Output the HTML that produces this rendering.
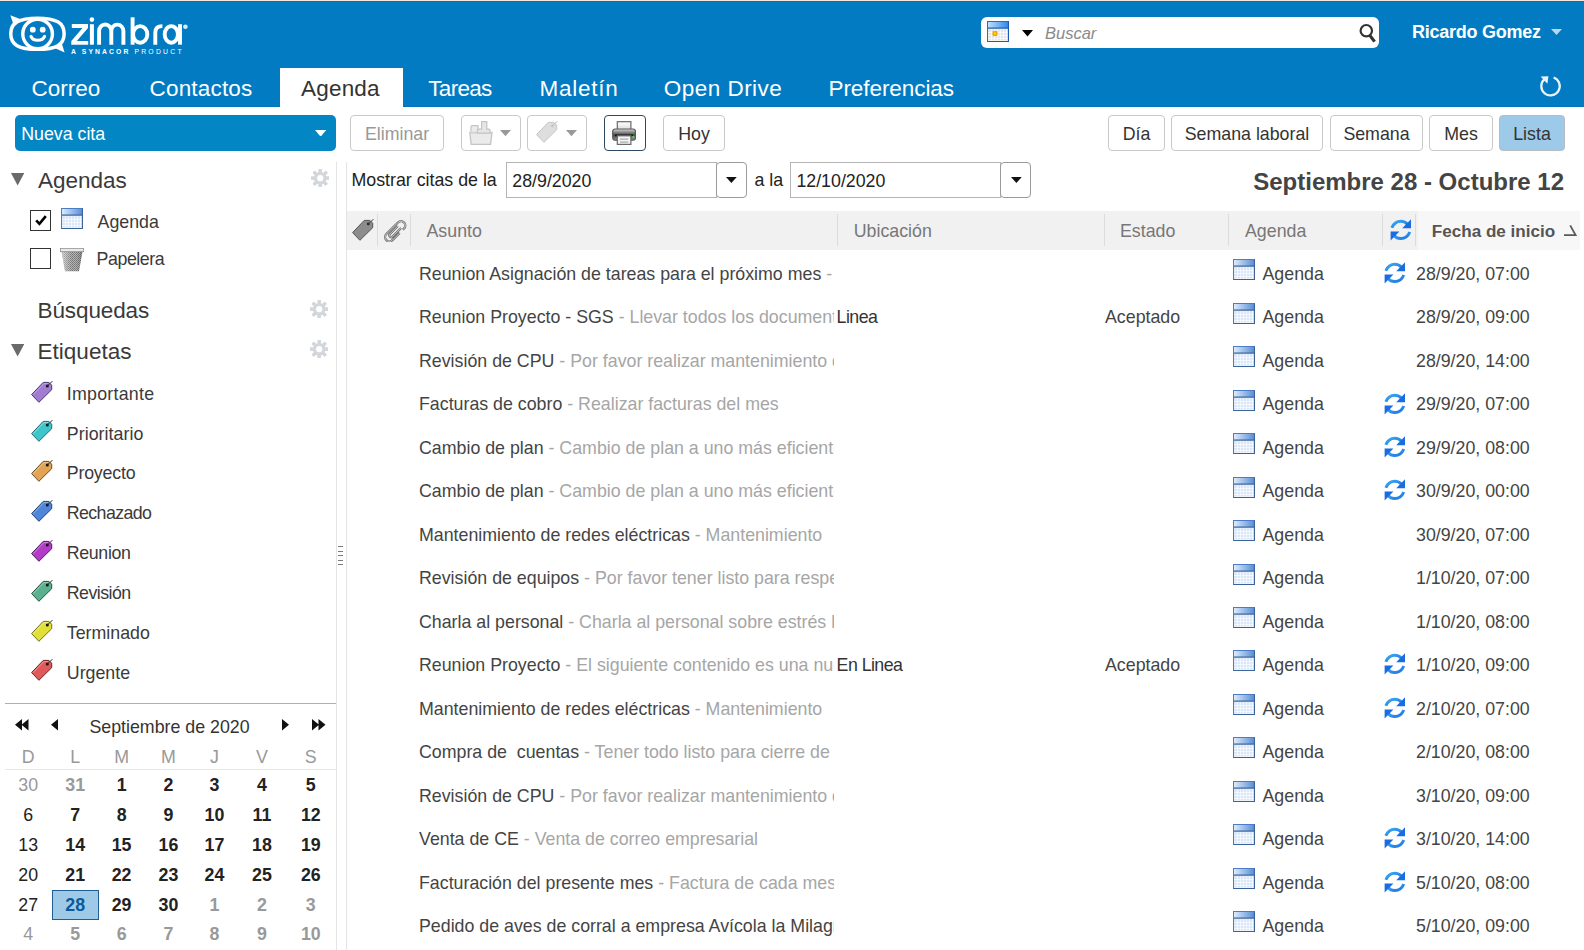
<!DOCTYPE html>
<html><head><meta charset="utf-8"><title>Zimbra</title><style>
*{box-sizing:border-box}
html,body{margin:0;padding:0;width:1584px;height:950px;overflow:hidden;background:#fff;font-family:"Liberation Sans", sans-serif}
.a{position:absolute}
svg.a{z-index:1}
.t{position:absolute;line-height:1;white-space:nowrap}
.btn{position:absolute;border:1px solid #c9c9c9;border-radius:4px;background:#fff}
</style></head>
<body>
<div class="a" style="left:0;top:0;width:1584px;height:1px;background:#f3e6dc"></div>
<div class="a" style="left:0;top:1px;width:1584px;height:106px;background:#027bc2;border-top:1px solid #0073be;border-bottom:1px solid #0274bb"></div>
<div class="a" style="left:280px;top:68px;width:123px;height:39px;background:#fff"></div>
<div class="t " style="left:31.5px;top:77.95px;font-size:22.5px;color:#fff;font-weight:400;letter-spacing:0px">Correo</div>
<div class="t " style="left:149.5px;top:77.95px;font-size:22.5px;color:#fff;font-weight:400;letter-spacing:0.19px">Contactos</div>
<div class="t " style="left:301px;top:77.95px;font-size:22.5px;color:#333;font-weight:400;letter-spacing:0.2px">Agenda</div>
<div class="t " style="left:428.3px;top:77.95px;font-size:22.5px;color:#fff;font-weight:400;letter-spacing:-0.7px">Tareas</div>
<div class="t " style="left:539.5px;top:77.95px;font-size:22.5px;color:#fff;font-weight:400;letter-spacing:0.75px">Maletín</div>
<div class="t " style="left:663.8px;top:77.95px;font-size:22.5px;color:#fff;font-weight:400;letter-spacing:0.47px">Open Drive</div>
<div class="t " style="left:828.5px;top:77.95px;font-size:22.5px;color:#fff;font-weight:400;letter-spacing:-0.07px">Preferencias</div>
<div class="a" style="left:981px;top:17px;width:398px;height:31px;background:#fff;border-radius:6px"></div>
<div class="t " style="left:1045px;top:24.93px;font-size:16.5px;color:#8a8a8a;font-weight:400;font-style:italic">Buscar</div>
<div class="t " style="left:1412px;top:23.26px;font-size:18px;color:#fff;font-weight:700;letter-spacing:-0.25px">Ricardo Gomez</div>
<svg class="a" style="left:0px;top:0px;" width="200" height="60" viewBox="0 0 200 60"><path d="M10.750000000000004,33.75 C10.750000000000004,22.83 18.760000000000005,18.15 37.45,18.15 C56.14,18.15 64.15,22.83 64.15,33.75 C64.15,44.67 56.14,49.35 37.45,49.35 C18.760000000000005,49.35 10.750000000000004,44.67 10.750000000000004,33.75 Z" fill="none" stroke="#fff" stroke-width="3.5"/><path d="M10.3,15.2 L22,19.8 L14.2,26.5 Z" fill="#fff"/><path d="M64.6,52.6 L53.5,47.6 L61.2,41.4 Z" fill="#fff"/><circle cx="37.6" cy="34" r="14.8" fill="none" stroke="#fff" stroke-width="3.4"/><circle cx="32.8" cy="29.7" r="2.9" fill="#fff"/><circle cx="42.7" cy="29.7" r="2.9" fill="#fff"/><path d="M31.0,36.4 C33,41.6 42.4,41.6 44.6,36.4" fill="none" stroke="#fff" stroke-width="3.1" stroke-linecap="round"/><path d="M71.8,24.1 H88 V27.9 L76.8,40.9 H88.2 V44.7 H71.3 V40.9 L82.5,27.9 H71.8 Z" fill="#fff"/><rect x="89.9" y="24.2" width="4" height="20.5" fill="#fff"/><circle cx="91.9" cy="19.6" r="2.3" fill="#fff"/><path d="M99.1,44.7 V31 A5.9,6.3 0 0 1 111.3,31 V44.7 M111.3,31 A6,6.3 0 0 1 123.4,31 V44.7" fill="none" stroke="#fff" stroke-width="3.9"/><path d="M132.6,17.3 V44.7" fill="none" stroke="#fff" stroke-width="3.9"/><ellipse cx="140.2" cy="34.4" rx="7.1" ry="8.3" fill="none" stroke="#fff" stroke-width="3.9"/><path d="M155.3,44.7 V32.5 Q155.3,26.1 162.4,26.1" fill="none" stroke="#fff" stroke-width="3.9"/><ellipse cx="171.3" cy="34.4" rx="6.6" ry="8.3" fill="none" stroke="#fff" stroke-width="3.9"/><path d="M180,24.2 V44.7" fill="none" stroke="#fff" stroke-width="3.9"/><circle cx="185.4" cy="26.7" r="2.3" fill="#fff" opacity="0.85"/></svg>
<div class="t" style="left:71px;top:49px;font-size:6.8px;line-height:6px;color:#fff;font-weight:700;letter-spacing:2.1px">A SYNACOR <span style="font-weight:400;letter-spacing:2.25px">PRODUCT</span></div>
<svg class="a" style="left:987px;top:21px;" width="22" height="21" viewBox="0 0 22 21"><defs><linearGradient id="cgsearch21" x1="0" x2="1"><stop offset="0" stop-color="#bfe0ff"/><stop offset="1" stop-color="#2f8be6"/></linearGradient></defs><rect x="0.5" y="0.5" width="21" height="20" fill="#e6e6e6" stroke="#1f6fd0"/><rect x="1" y="1" width="20" height="6" fill="url(#cgsearch21)"/><rect x="1" y="6.5" width="20" height="1.2" fill="#1a5bb5"/><rect x="4" y="8" width="0.8" height="12" fill="#fff" opacity="0.8"/><rect x="7" y="8" width="0.8" height="12" fill="#fff" opacity="0.8"/><rect x="10" y="8" width="0.8" height="12" fill="#fff" opacity="0.8"/><rect x="13" y="8" width="0.8" height="12" fill="#fff" opacity="0.8"/><rect x="16" y="8" width="0.8" height="12" fill="#fff" opacity="0.8"/><rect x="19" y="8" width="0.8" height="12" fill="#fff" opacity="0.8"/><rect x="1" y="11" width="20" height="0.8" fill="#fff" opacity="0.8"/><rect x="1" y="14" width="20" height="0.8" fill="#fff" opacity="0.8"/><rect x="1" y="17" width="20" height="0.8" fill="#fff" opacity="0.8"/><rect x="1" y="19.5" width="20" height="0.8" fill="#fff" opacity="0.8"/><path d="M21.5,0.5 V20.5 H0.5" fill="none" stroke="#1a5bb5" stroke-width="1.2"/><rect x="5.5" y="10" width="5" height="5" rx="1" fill="#f0a800"/><rect x="7" y="11.5" width="2" height="2" fill="#ffe000"/></svg>
<svg class="a" style="left:1022px;top:30px;" width="11" height="6.5" viewBox="0 0 11 6.5"><path d="M0,0 H11 L5.5,6.5 Z" fill="#000"/></svg>
<svg class="a" style="left:1358px;top:23px;" width="20" height="21" viewBox="0 0 20 21"><circle cx="8.3" cy="7.7" r="5.7" fill="none" stroke="#333" stroke-width="2.2"/><path d="M12,12.6 L16.6,18.6" stroke="#333" stroke-width="3.2"/></svg>
<svg class="a" style="left:1551px;top:29px;" width="11" height="6" viewBox="0 0 11 6"><path d="M0,0 H11 L5.5,6 Z" fill="#b9d8ee"/></svg>
<svg class="a" style="left:1538px;top:74px;" width="25" height="25" viewBox="0 0 25 25"><path d="M6.5,5.2 A9.2,9.2 0 1 0 15.6,3.5" fill="none" stroke="#e9f3fa" stroke-width="2.3"/><path d="M2.6,2.4 L10.4,2.2 L9.4,9.8 Z" fill="#e9f3fa"/></svg>
<div class="a" style="left:15px;top:115px;width:321px;height:36px;background:#0287c4;border-radius:5px"></div>
<div class="t " style="left:21.2px;top:125.93px;font-size:17.8px;color:#fff;font-weight:400;">Nueva cita</div>
<div class="btn" style="left:350px;top:115px;width:94px;height:36px;"></div>
<div class="t" style="left:350px;width:94px;text-align:center;top:125.93px;font-size:17.8px;color:#999">Eliminar</div>
<div class="btn" style="left:461px;top:115px;width:60px;height:36px;"></div>
<div class="btn" style="left:527px;top:115px;width:60px;height:36px;"></div>
<div class="btn" style="left:604px;top:115px;width:42px;height:36px;border-color:#2f4a60;"></div>
<div class="btn" style="left:663px;top:115px;width:62px;height:36px;"></div>
<div class="t" style="left:663px;width:62px;text-align:center;top:125.93px;font-size:17.8px;color:#333">Hoy</div>
<div class="btn" style="left:1108px;top:115px;width:57px;height:36px;"></div>
<div class="t" style="left:1108px;width:57px;text-align:center;top:125.93px;font-size:17.8px;color:#333">Día</div>
<div class="btn" style="left:1171px;top:115px;width:152px;height:36px;"></div>
<div class="t" style="left:1171px;width:152px;text-align:center;top:125.93px;font-size:17.8px;color:#333">Semana laboral</div>
<div class="btn" style="left:1330px;top:115px;width:93px;height:36px;"></div>
<div class="t" style="left:1330px;width:93px;text-align:center;top:125.93px;font-size:17.8px;color:#333">Semana</div>
<div class="btn" style="left:1429px;top:115px;width:64px;height:36px;"></div>
<div class="t" style="left:1429px;width:64px;text-align:center;top:125.93px;font-size:17.8px;color:#333">Mes</div>
<div class="btn" style="left:1499px;top:115px;width:66px;height:36px;background:#9ccae8;border-color:#b4bcc4;"></div>
<div class="t" style="left:1499px;width:66px;text-align:center;top:125.93px;font-size:17.8px;color:#333">Lista</div>
<svg class="a" style="left:314.5px;top:129.5px;" width="11.25" height="6.75" viewBox="0 0 11.25 6.75"><path d="M0,0 H11.25 L5.625,6.75 Z" fill="#fff"/></svg>
<svg class="a" style="left:468.6px;top:120.5px;" width="24" height="24.5" viewBox="0 0 24 24.5"><path d="M2,10.5 V5.5 Q2,4.6 3,4.6 H9 V10.5" fill="#ebebeb" stroke="#c4c4c4" stroke-width="1.2"/><path d="M0.8,11.3 H23 L21.6,23.4 H2.2 Z" fill="#ebebeb" stroke="#c4c4c4" stroke-width="1.3"/><path d="M1.2,12 H22.6" stroke="#d6d6d6" stroke-width="1.5"/><path d="M12.6,0.6 H17.8 V8.2 H19.6 Q21.2,8.2 21.2,10 V12.2 H8.4 V10 Q8.4,8.2 10.2,8.2 H12.6 Z" fill="#e6e6e6" stroke="#c4c4c4" stroke-width="1.2"/></svg>
<svg class="a" style="left:499.8px;top:129.8px;" width="11" height="6.2" viewBox="0 0 11 6.2"><path d="M0,0 H11 L5.5,6.2 Z" fill="#999"/></svg>
<svg class="a" style="left:536.2px;top:120.8px;" width="23" height="23" viewBox="0 0 23 23"><path d="M0.6,13.6 L12.2,1.4 L17.9,1.4 L20.7,4.2 L20.7,8.7 L7.9,21.3 Z" fill="#dedede" stroke="#c4c4c4" stroke-width="1"/><circle cx="16.3" cy="4.9" r="1.4" fill="#c8c8c8"/><path d="M16.3,4.9 L21.7,0" stroke="#bbb" stroke-width="1"/></svg>
<svg class="a" style="left:565.7px;top:129.8px;" width="11" height="6.2" viewBox="0 0 11 6.2"><path d="M0,0 H11 L5.5,6.2 Z" fill="#999"/></svg>
<svg class="a" style="left:611.8px;top:120.5px;" width="24.5" height="24.5" viewBox="0 0 24.5 24.5"><defs><linearGradient id="pb" x1="0" y1="0" x2="0" y2="1"><stop offset="0" stop-color="#d8d8d8"/><stop offset="0.55" stop-color="#444"/><stop offset="1" stop-color="#9a9a9a"/></linearGradient><linearGradient id="pp" x1="0" y1="0" x2="0" y2="1"><stop offset="0" stop-color="#fff"/><stop offset="1" stop-color="#ddd"/></linearGradient></defs><rect x="5.3" y="0.7" width="13.6" height="8" fill="url(#pp)" stroke="#6a6a6a" stroke-width="1.2"/><rect x="0.7" y="8" width="22.8" height="11.2" rx="2.5" fill="url(#pb)" stroke="#5a5a5a" stroke-width="1.2"/><rect x="3" y="13.6" width="18" height="1.6" fill="#111"/><circle cx="21.4" cy="16" r="1.2" fill="#3de03d"/><rect x="5.3" y="14.8" width="13.6" height="8.6" fill="#f4f4f4" stroke="#6a6a6a" stroke-width="1.2"/><rect x="8" y="17.6" width="8.2" height="1" fill="#999"/><rect x="8" y="20.6" width="8.2" height="1" fill="#999"/></svg>
<svg class="a" style="left:726px;top:177px;" width="10.75" height="6" viewBox="0 0 10.75 6"><path d="M0,0 H10.75 L5.375,6 Z" fill="#111"/></svg>
<svg class="a" style="left:1010.75px;top:177px;" width="10.75" height="6" viewBox="0 0 10.75 6"><path d="M0,0 H10.75 L5.375,6 Z" fill="#111"/></svg>
<svg class="a" style="left:352px;top:218.5px;" width="23" height="23" viewBox="0 0 23 23"><path d="M0.6,13.6 L12.2,1.4 L17.9,1.4 L20.7,4.2 L20.7,8.7 L7.9,21.3 Z" fill="#8c8c8c" stroke="#555" stroke-width="1"/><circle cx="16.3" cy="4.9" r="1.4" fill="#222"/><path d="M16.3,4.9 L21.7,0" stroke="#444" stroke-width="1"/></svg>
<svg class="a" style="left:384px;top:220px;" width="23" height="22" viewBox="0 0 23 22"><g transform="translate(11.2,11.3) rotate(-45)"><path d="M2,4.3 H-8.2 A4.3,4.3 0 0 1 -8.2,-4.3 H8.2 A4.3,4.3 0 0 1 8.2,4.3 H6.5 M6.5,1.9 H-5.6 A1.9,1.9 0 0 1 -5.6,-1.9 H5.6" fill="none" stroke="#6c6c6c" stroke-width="2.3"/><path d="M2,4.3 H-8.2 A4.3,4.3 0 0 1 -8.2,-4.3 H8.2 A4.3,4.3 0 0 1 8.2,4.3 H6.5 M6.5,1.9 H-5.6 A1.9,1.9 0 0 1 -5.6,-1.9 H5.6" fill="none" stroke="#ececec" stroke-width="0.7"/></g></svg>
<svg class="a" style="left:1563px;top:224px;" width="14" height="13" viewBox="0 0 14 13"><path d="M1,11.1 H12.6 L7.2,1.4" fill="none" stroke="#5a5a5a" stroke-width="1.8"/></svg>
<svg class="a" style="left:1389.6px;top:219px;" width="22" height="22" viewBox="0 0 22 22"><defs><linearGradient id="rg" x1="0" y1="0" x2="1" y2="1"><stop offset="0" stop-color="#3aaaf6"/><stop offset="1" stop-color="#1d74e2"/></linearGradient></defs><path d="M1.8,8.8 Q4.5,2.2 10.8,2.2 Q15,2.2 17.5,5.2" fill="none" stroke="url(#rg)" stroke-width="3"/><path d="M21,0.3 L21,9.2 L12.2,9.2 Z" fill="#1a6de0"/><path d="M19.8,13 Q17,19.6 10.8,19.6 Q6.6,19.6 4.2,16.6" fill="none" stroke="url(#rg)" stroke-width="3"/><path d="M0.6,21.5 L0.6,12.6 L9.4,12.6 Z" fill="#1a6de0"/></svg>
<svg class="a" style="left:10.7px;top:173.3px;" width="13.3" height="12.6" viewBox="0 0 13.3 12.6"><path d="M0,0 H13.3 L6.65,12.6 Z" fill="#6a6a6a"/></svg>
<svg class="a" style="left:10.7px;top:344.3px;" width="13.3" height="12.6" viewBox="0 0 13.3 12.6"><path d="M0,0 H13.3 L6.65,12.6 Z" fill="#6a6a6a"/></svg>
<svg class="a" style="left:310.7px;top:168.5px;" width="18.4" height="18.4" viewBox="0 0 18.4 18.4"><rect x="7.6" y="0" width="3.2" height="18.4" rx="0.8" fill="#d3d6da" transform="rotate(0 9.2 9.2)"/><rect x="7.6" y="0" width="3.2" height="18.4" rx="0.8" fill="#d3d6da" transform="rotate(45 9.2 9.2)"/><rect x="7.6" y="0" width="3.2" height="18.4" rx="0.8" fill="#d3d6da" transform="rotate(90 9.2 9.2)"/><rect x="7.6" y="0" width="3.2" height="18.4" rx="0.8" fill="#d3d6da" transform="rotate(135 9.2 9.2)"/><rect x="7.6" y="0" width="3.2" height="18.4" rx="0.8" fill="#d3d6da" transform="rotate(180 9.2 9.2)"/><rect x="7.6" y="0" width="3.2" height="18.4" rx="0.8" fill="#d3d6da" transform="rotate(225 9.2 9.2)"/><rect x="7.6" y="0" width="3.2" height="18.4" rx="0.8" fill="#d3d6da" transform="rotate(270 9.2 9.2)"/><rect x="7.6" y="0" width="3.2" height="18.4" rx="0.8" fill="#d3d6da" transform="rotate(315 9.2 9.2)"/><circle cx="9.2" cy="9.2" r="6.3" fill="#d3d6da"/><circle cx="9.2" cy="9.2" r="3.1" fill="#fff"/></svg>
<svg class="a" style="left:310.1px;top:299.5px;" width="18.4" height="18.4" viewBox="0 0 18.4 18.4"><rect x="7.6" y="0" width="3.2" height="18.4" rx="0.8" fill="#d3d6da" transform="rotate(0 9.2 9.2)"/><rect x="7.6" y="0" width="3.2" height="18.4" rx="0.8" fill="#d3d6da" transform="rotate(45 9.2 9.2)"/><rect x="7.6" y="0" width="3.2" height="18.4" rx="0.8" fill="#d3d6da" transform="rotate(90 9.2 9.2)"/><rect x="7.6" y="0" width="3.2" height="18.4" rx="0.8" fill="#d3d6da" transform="rotate(135 9.2 9.2)"/><rect x="7.6" y="0" width="3.2" height="18.4" rx="0.8" fill="#d3d6da" transform="rotate(180 9.2 9.2)"/><rect x="7.6" y="0" width="3.2" height="18.4" rx="0.8" fill="#d3d6da" transform="rotate(225 9.2 9.2)"/><rect x="7.6" y="0" width="3.2" height="18.4" rx="0.8" fill="#d3d6da" transform="rotate(270 9.2 9.2)"/><rect x="7.6" y="0" width="3.2" height="18.4" rx="0.8" fill="#d3d6da" transform="rotate(315 9.2 9.2)"/><circle cx="9.2" cy="9.2" r="6.3" fill="#d3d6da"/><circle cx="9.2" cy="9.2" r="3.1" fill="#fff"/></svg>
<svg class="a" style="left:310.1px;top:339.5px;" width="18.4" height="18.4" viewBox="0 0 18.4 18.4"><rect x="7.6" y="0" width="3.2" height="18.4" rx="0.8" fill="#d3d6da" transform="rotate(0 9.2 9.2)"/><rect x="7.6" y="0" width="3.2" height="18.4" rx="0.8" fill="#d3d6da" transform="rotate(45 9.2 9.2)"/><rect x="7.6" y="0" width="3.2" height="18.4" rx="0.8" fill="#d3d6da" transform="rotate(90 9.2 9.2)"/><rect x="7.6" y="0" width="3.2" height="18.4" rx="0.8" fill="#d3d6da" transform="rotate(135 9.2 9.2)"/><rect x="7.6" y="0" width="3.2" height="18.4" rx="0.8" fill="#d3d6da" transform="rotate(180 9.2 9.2)"/><rect x="7.6" y="0" width="3.2" height="18.4" rx="0.8" fill="#d3d6da" transform="rotate(225 9.2 9.2)"/><rect x="7.6" y="0" width="3.2" height="18.4" rx="0.8" fill="#d3d6da" transform="rotate(270 9.2 9.2)"/><rect x="7.6" y="0" width="3.2" height="18.4" rx="0.8" fill="#d3d6da" transform="rotate(315 9.2 9.2)"/><circle cx="9.2" cy="9.2" r="6.3" fill="#d3d6da"/><circle cx="9.2" cy="9.2" r="3.1" fill="#fff"/></svg>
<svg class="a" style="left:35px;top:214px;" width="12" height="12" viewBox="0 0 12 12"><path d="M1.2,6.4 L4.4,9.8 L10.8,2.2" fill="none" stroke="#000" stroke-width="2.6"/></svg>
<svg class="a" style="left:60px;top:248px;" width="24" height="24" viewBox="0 0 24 24"><defs><pattern id="mesh" width="2" height="2" patternUnits="userSpaceOnUse"><rect width="2" height="2" fill="#b4b4b4"/><rect width="1" height="1" fill="#707070"/><rect x="1" y="1" width="1" height="1" fill="#808080"/></pattern><linearGradient id="tsh" x1="0" x2="1"><stop offset="0" stop-color="#fff" stop-opacity="0.5"/><stop offset="0.5" stop-color="#fff" stop-opacity="0"/><stop offset="1" stop-color="#000" stop-opacity="0.25"/></linearGradient></defs><path d="M1.5,3.2 L5,23.2 H19 L22.5,3.2 Z" fill="url(#mesh)"/><path d="M1.5,3.2 L5,23.2 H19 L22.5,3.2 Z" fill="url(#tsh)"/><rect x="0.3" y="0.3" width="23.4" height="3.4" fill="#e8e8e8" stroke="#8a8a8a" stroke-width="0.8"/></svg>
<svg class="a" style="left:60.5px;top:208px;" width="22" height="21" viewBox="0 0 22 21"><defs><linearGradient id="cgagenda208" x1="0" x2="1"><stop offset="0" stop-color="#dcebfb"/><stop offset="1" stop-color="#5a8fd6"/></linearGradient></defs><rect x="0.5" y="0.5" width="21" height="20" fill="#d9e7f8" stroke="#4a7cc8"/><rect x="1" y="1" width="20" height="6" fill="url(#cgagenda208)"/><rect x="1" y="6.5" width="20" height="1.2" fill="#3b6299"/><rect x="4" y="8" width="0.8" height="12" fill="#fff" opacity="0.8"/><rect x="7" y="8" width="0.8" height="12" fill="#fff" opacity="0.8"/><rect x="10" y="8" width="0.8" height="12" fill="#fff" opacity="0.8"/><rect x="13" y="8" width="0.8" height="12" fill="#fff" opacity="0.8"/><rect x="16" y="8" width="0.8" height="12" fill="#fff" opacity="0.8"/><rect x="19" y="8" width="0.8" height="12" fill="#fff" opacity="0.8"/><rect x="1" y="11" width="20" height="0.8" fill="#fff" opacity="0.8"/><rect x="1" y="14" width="20" height="0.8" fill="#fff" opacity="0.8"/><rect x="1" y="17" width="20" height="0.8" fill="#fff" opacity="0.8"/><rect x="1" y="19.5" width="20" height="0.8" fill="#fff" opacity="0.8"/><path d="M21.5,0.5 V20.5 H0.5" fill="none" stroke="#3b6299" stroke-width="1.2"/></svg>
<svg class="a" style="left:15px;top:719px;" width="14" height="12" viewBox="0 0 14 12"><path d="M7,0 V11.5 L0,5.75 Z M13.5,0 V11.5 L6.5,5.75 Z" fill="#111"/></svg>
<svg class="a" style="left:51px;top:719px;" width="8" height="12" viewBox="0 0 8 12"><path d="M7,0 V11.5 L0,5.75 Z" fill="#111"/></svg>
<svg class="a" style="left:281.8px;top:719px;" width="8" height="12" viewBox="0 0 8 12"><path d="M0,0 V11.5 L7,5.75 Z" fill="#111"/></svg>
<svg class="a" style="left:312px;top:719px;" width="14" height="12" viewBox="0 0 14 12"><path d="M0,0 V11.5 L7,5.75 Z M6.5,0 V11.5 L13.5,5.75 Z" fill="#111"/></svg>
<div class="a" style="left:338px;top:546.20px;width:5px;height:1.2px;background:#7a7a7a"></div>
<div class="a" style="left:338px;top:550.68px;width:5px;height:1.2px;background:#7a7a7a"></div>
<div class="a" style="left:338px;top:555.16px;width:5px;height:1.2px;background:#7a7a7a"></div>
<div class="a" style="left:338px;top:559.64px;width:5px;height:1.2px;background:#7a7a7a"></div>
<div class="a" style="left:338px;top:564.12px;width:5px;height:1.2px;background:#7a7a7a"></div>
<div class="a" style="left:336px;top:162px;width:1px;height:788px;background:#e4e4e4"></div>
<div class="a" style="left:346px;top:162px;width:1px;height:788px;background:#e4e4e4"></div>
<div class="t " style="left:351.5px;top:172.18px;font-size:17.8px;color:#222;font-weight:400;">Mostrar citas de la</div>
<div class="a" style="left:506px;top:162px;width:211px;height:36px;border:1px solid #b5b5b5;background:#fff"></div>
<div class="a" style="left:716px;top:162px;width:31px;height:36px;border:1px solid #9a9a9a;border-radius:4px;background:#fff"></div>
<div class="t " style="left:512.3px;top:173.03px;font-size:17.8px;color:#222;font-weight:400;">28/9/2020</div>
<div class="t " style="left:754.5px;top:172.18px;font-size:17.8px;color:#222;font-weight:400;">a la</div>
<div class="a" style="left:790px;top:162px;width:211px;height:36px;border:1px solid #b5b5b5;background:#fff"></div>
<div class="a" style="left:1000px;top:162px;width:31px;height:36px;border:1px solid #9a9a9a;border-radius:4px;background:#fff"></div>
<div class="t " style="left:796.4px;top:173.03px;font-size:17.8px;color:#222;font-weight:400;">12/10/2020</div>
<div class="t" style="right:20px;top:170.18px;font-size:24px;color:#444;font-weight:700">Septiembre 28 - Octubre 12</div>
<div class="a" style="left:347px;top:211px;width:1071px;height:39px;background:#f1f1f1"></div>
<div class="a" style="left:1418px;top:211px;width:162px;height:39px;background:#f7f7f7"></div>
<div class="a" style="left:377px;top:214px;width:1px;height:32px;background:#dcdcdc"></div>
<div class="a" style="left:410px;top:214px;width:1px;height:32px;background:#dcdcdc"></div>
<div class="a" style="left:837px;top:214px;width:1px;height:32px;background:#dcdcdc"></div>
<div class="a" style="left:1104px;top:214px;width:1px;height:32px;background:#dcdcdc"></div>
<div class="a" style="left:1228px;top:214px;width:1px;height:32px;background:#dcdcdc"></div>
<div class="a" style="left:1382px;top:214px;width:1px;height:32px;background:#dcdcdc"></div>
<div class="a" style="left:1415px;top:214px;width:1px;height:32px;background:#dcdcdc"></div>
<div class="t " style="left:426.5px;top:222.68px;font-size:17.8px;color:#777;font-weight:400;">Asunto</div>
<div class="t " style="left:853.75px;top:222.68px;font-size:17.8px;color:#777;font-weight:400;">Ubicación</div>
<div class="t " style="left:1120px;top:222.68px;font-size:17.8px;color:#777;font-weight:400;">Estado</div>
<div class="t " style="left:1245px;top:222.68px;font-size:17.8px;color:#777;font-weight:400;">Agenda</div>
<div class="t " style="left:1431.75px;top:223.27px;font-size:17.1px;color:#555;font-weight:700;">Fecha de inicio</div>
<div class="t" style="left:419px;top:265.93px;font-size:17.8px;color:#444;width:415px;overflow:hidden">Reunion Asignación de tareas para el próximo mes<span style="color:#a6a6a6"> - </span></div>
<svg class="a" style="left:1233px;top:259.25px;" width="22" height="21" viewBox="0 0 22 21"><defs><linearGradient id="cgagenda259" x1="0" x2="1"><stop offset="0" stop-color="#dcebfb"/><stop offset="1" stop-color="#5a8fd6"/></linearGradient></defs><rect x="0.5" y="0.5" width="21" height="20" fill="#d9e7f8" stroke="#4a7cc8"/><rect x="1" y="1" width="20" height="6" fill="url(#cgagenda259)"/><rect x="1" y="6.5" width="20" height="1.2" fill="#3b6299"/><rect x="4" y="8" width="0.8" height="12" fill="#fff" opacity="0.8"/><rect x="7" y="8" width="0.8" height="12" fill="#fff" opacity="0.8"/><rect x="10" y="8" width="0.8" height="12" fill="#fff" opacity="0.8"/><rect x="13" y="8" width="0.8" height="12" fill="#fff" opacity="0.8"/><rect x="16" y="8" width="0.8" height="12" fill="#fff" opacity="0.8"/><rect x="19" y="8" width="0.8" height="12" fill="#fff" opacity="0.8"/><rect x="1" y="11" width="20" height="0.8" fill="#fff" opacity="0.8"/><rect x="1" y="14" width="20" height="0.8" fill="#fff" opacity="0.8"/><rect x="1" y="17" width="20" height="0.8" fill="#fff" opacity="0.8"/><rect x="1" y="19.5" width="20" height="0.8" fill="#fff" opacity="0.8"/><path d="M21.5,0.5 V20.5 H0.5" fill="none" stroke="#3b6299" stroke-width="1.2"/></svg>
<div class="t " style="left:1262.5px;top:265.93px;font-size:17.8px;color:#444;font-weight:400;">Agenda</div>
<svg class="a" style="left:1384px;top:262.1px;" width="22" height="22" viewBox="0 0 22 22"><defs><linearGradient id="rg" x1="0" y1="0" x2="1" y2="1"><stop offset="0" stop-color="#3aaaf6"/><stop offset="1" stop-color="#1d74e2"/></linearGradient></defs><path d="M1.8,8.8 Q4.5,2.2 10.8,2.2 Q15,2.2 17.5,5.2" fill="none" stroke="url(#rg)" stroke-width="3"/><path d="M21,0.3 L21,9.2 L12.2,9.2 Z" fill="#1a6de0"/><path d="M19.8,13 Q17,19.6 10.8,19.6 Q6.6,19.6 4.2,16.6" fill="none" stroke="url(#rg)" stroke-width="3"/><path d="M0.6,21.5 L0.6,12.6 L9.4,12.6 Z" fill="#1a6de0"/></svg>
<div class="t " style="left:1416px;top:265.93px;font-size:17.8px;color:#444;font-weight:400;">28/9/20, 07:00</div>
<div class="t" style="left:419px;top:309.40px;font-size:17.8px;color:#444;width:415px;overflow:hidden">Reunion Proyecto - SGS<span style="color:#a6a6a6"> - Llevar todos los documentos necesarios</span></div>
<div class="t " style="left:836.6px;top:309.40px;font-size:17.8px;color:#333;font-weight:400;letter-spacing:-0.55px">Linea</div>
<div class="t " style="left:1105px;top:309.40px;font-size:17.8px;color:#444;font-weight:400;">Aceptado</div>
<svg class="a" style="left:1233px;top:302.72px;" width="22" height="21" viewBox="0 0 22 21"><defs><linearGradient id="cgagenda302" x1="0" x2="1"><stop offset="0" stop-color="#dcebfb"/><stop offset="1" stop-color="#5a8fd6"/></linearGradient></defs><rect x="0.5" y="0.5" width="21" height="20" fill="#d9e7f8" stroke="#4a7cc8"/><rect x="1" y="1" width="20" height="6" fill="url(#cgagenda302)"/><rect x="1" y="6.5" width="20" height="1.2" fill="#3b6299"/><rect x="4" y="8" width="0.8" height="12" fill="#fff" opacity="0.8"/><rect x="7" y="8" width="0.8" height="12" fill="#fff" opacity="0.8"/><rect x="10" y="8" width="0.8" height="12" fill="#fff" opacity="0.8"/><rect x="13" y="8" width="0.8" height="12" fill="#fff" opacity="0.8"/><rect x="16" y="8" width="0.8" height="12" fill="#fff" opacity="0.8"/><rect x="19" y="8" width="0.8" height="12" fill="#fff" opacity="0.8"/><rect x="1" y="11" width="20" height="0.8" fill="#fff" opacity="0.8"/><rect x="1" y="14" width="20" height="0.8" fill="#fff" opacity="0.8"/><rect x="1" y="17" width="20" height="0.8" fill="#fff" opacity="0.8"/><rect x="1" y="19.5" width="20" height="0.8" fill="#fff" opacity="0.8"/><path d="M21.5,0.5 V20.5 H0.5" fill="none" stroke="#3b6299" stroke-width="1.2"/></svg>
<div class="t " style="left:1262.5px;top:309.40px;font-size:17.8px;color:#444;font-weight:400;">Agenda</div>
<div class="t " style="left:1416px;top:309.40px;font-size:17.8px;color:#444;font-weight:400;">28/9/20, 09:00</div>
<div class="t" style="left:419px;top:352.87px;font-size:17.8px;color:#444;width:415px;overflow:hidden">Revisión de CPU<span style="color:#a6a6a6"> - Por favor realizar mantenimiento de</span></div>
<svg class="a" style="left:1233px;top:346.19px;" width="22" height="21" viewBox="0 0 22 21"><defs><linearGradient id="cgagenda346" x1="0" x2="1"><stop offset="0" stop-color="#dcebfb"/><stop offset="1" stop-color="#5a8fd6"/></linearGradient></defs><rect x="0.5" y="0.5" width="21" height="20" fill="#d9e7f8" stroke="#4a7cc8"/><rect x="1" y="1" width="20" height="6" fill="url(#cgagenda346)"/><rect x="1" y="6.5" width="20" height="1.2" fill="#3b6299"/><rect x="4" y="8" width="0.8" height="12" fill="#fff" opacity="0.8"/><rect x="7" y="8" width="0.8" height="12" fill="#fff" opacity="0.8"/><rect x="10" y="8" width="0.8" height="12" fill="#fff" opacity="0.8"/><rect x="13" y="8" width="0.8" height="12" fill="#fff" opacity="0.8"/><rect x="16" y="8" width="0.8" height="12" fill="#fff" opacity="0.8"/><rect x="19" y="8" width="0.8" height="12" fill="#fff" opacity="0.8"/><rect x="1" y="11" width="20" height="0.8" fill="#fff" opacity="0.8"/><rect x="1" y="14" width="20" height="0.8" fill="#fff" opacity="0.8"/><rect x="1" y="17" width="20" height="0.8" fill="#fff" opacity="0.8"/><rect x="1" y="19.5" width="20" height="0.8" fill="#fff" opacity="0.8"/><path d="M21.5,0.5 V20.5 H0.5" fill="none" stroke="#3b6299" stroke-width="1.2"/></svg>
<div class="t " style="left:1262.5px;top:352.87px;font-size:17.8px;color:#444;font-weight:400;">Agenda</div>
<div class="t " style="left:1416px;top:352.87px;font-size:17.8px;color:#444;font-weight:400;">28/9/20, 14:00</div>
<div class="t" style="left:419px;top:396.34px;font-size:17.8px;color:#444;width:415px;overflow:hidden">Facturas de cobro<span style="color:#a6a6a6"> - Realizar facturas del mes</span></div>
<svg class="a" style="left:1233px;top:389.66px;" width="22" height="21" viewBox="0 0 22 21"><defs><linearGradient id="cgagenda389" x1="0" x2="1"><stop offset="0" stop-color="#dcebfb"/><stop offset="1" stop-color="#5a8fd6"/></linearGradient></defs><rect x="0.5" y="0.5" width="21" height="20" fill="#d9e7f8" stroke="#4a7cc8"/><rect x="1" y="1" width="20" height="6" fill="url(#cgagenda389)"/><rect x="1" y="6.5" width="20" height="1.2" fill="#3b6299"/><rect x="4" y="8" width="0.8" height="12" fill="#fff" opacity="0.8"/><rect x="7" y="8" width="0.8" height="12" fill="#fff" opacity="0.8"/><rect x="10" y="8" width="0.8" height="12" fill="#fff" opacity="0.8"/><rect x="13" y="8" width="0.8" height="12" fill="#fff" opacity="0.8"/><rect x="16" y="8" width="0.8" height="12" fill="#fff" opacity="0.8"/><rect x="19" y="8" width="0.8" height="12" fill="#fff" opacity="0.8"/><rect x="1" y="11" width="20" height="0.8" fill="#fff" opacity="0.8"/><rect x="1" y="14" width="20" height="0.8" fill="#fff" opacity="0.8"/><rect x="1" y="17" width="20" height="0.8" fill="#fff" opacity="0.8"/><rect x="1" y="19.5" width="20" height="0.8" fill="#fff" opacity="0.8"/><path d="M21.5,0.5 V20.5 H0.5" fill="none" stroke="#3b6299" stroke-width="1.2"/></svg>
<div class="t " style="left:1262.5px;top:396.34px;font-size:17.8px;color:#444;font-weight:400;">Agenda</div>
<svg class="a" style="left:1384px;top:392.51px;" width="22" height="22" viewBox="0 0 22 22"><defs><linearGradient id="rg" x1="0" y1="0" x2="1" y2="1"><stop offset="0" stop-color="#3aaaf6"/><stop offset="1" stop-color="#1d74e2"/></linearGradient></defs><path d="M1.8,8.8 Q4.5,2.2 10.8,2.2 Q15,2.2 17.5,5.2" fill="none" stroke="url(#rg)" stroke-width="3"/><path d="M21,0.3 L21,9.2 L12.2,9.2 Z" fill="#1a6de0"/><path d="M19.8,13 Q17,19.6 10.8,19.6 Q6.6,19.6 4.2,16.6" fill="none" stroke="url(#rg)" stroke-width="3"/><path d="M0.6,21.5 L0.6,12.6 L9.4,12.6 Z" fill="#1a6de0"/></svg>
<div class="t " style="left:1416px;top:396.34px;font-size:17.8px;color:#444;font-weight:400;">29/9/20, 07:00</div>
<div class="t" style="left:419px;top:439.81px;font-size:17.8px;color:#444;width:415px;overflow:hidden">Cambio de plan<span style="color:#a6a6a6"> - Cambio de plan a uno más eficiente</span></div>
<svg class="a" style="left:1233px;top:433.13px;" width="22" height="21" viewBox="0 0 22 21"><defs><linearGradient id="cgagenda433" x1="0" x2="1"><stop offset="0" stop-color="#dcebfb"/><stop offset="1" stop-color="#5a8fd6"/></linearGradient></defs><rect x="0.5" y="0.5" width="21" height="20" fill="#d9e7f8" stroke="#4a7cc8"/><rect x="1" y="1" width="20" height="6" fill="url(#cgagenda433)"/><rect x="1" y="6.5" width="20" height="1.2" fill="#3b6299"/><rect x="4" y="8" width="0.8" height="12" fill="#fff" opacity="0.8"/><rect x="7" y="8" width="0.8" height="12" fill="#fff" opacity="0.8"/><rect x="10" y="8" width="0.8" height="12" fill="#fff" opacity="0.8"/><rect x="13" y="8" width="0.8" height="12" fill="#fff" opacity="0.8"/><rect x="16" y="8" width="0.8" height="12" fill="#fff" opacity="0.8"/><rect x="19" y="8" width="0.8" height="12" fill="#fff" opacity="0.8"/><rect x="1" y="11" width="20" height="0.8" fill="#fff" opacity="0.8"/><rect x="1" y="14" width="20" height="0.8" fill="#fff" opacity="0.8"/><rect x="1" y="17" width="20" height="0.8" fill="#fff" opacity="0.8"/><rect x="1" y="19.5" width="20" height="0.8" fill="#fff" opacity="0.8"/><path d="M21.5,0.5 V20.5 H0.5" fill="none" stroke="#3b6299" stroke-width="1.2"/></svg>
<div class="t " style="left:1262.5px;top:439.81px;font-size:17.8px;color:#444;font-weight:400;">Agenda</div>
<svg class="a" style="left:1384px;top:435.98px;" width="22" height="22" viewBox="0 0 22 22"><defs><linearGradient id="rg" x1="0" y1="0" x2="1" y2="1"><stop offset="0" stop-color="#3aaaf6"/><stop offset="1" stop-color="#1d74e2"/></linearGradient></defs><path d="M1.8,8.8 Q4.5,2.2 10.8,2.2 Q15,2.2 17.5,5.2" fill="none" stroke="url(#rg)" stroke-width="3"/><path d="M21,0.3 L21,9.2 L12.2,9.2 Z" fill="#1a6de0"/><path d="M19.8,13 Q17,19.6 10.8,19.6 Q6.6,19.6 4.2,16.6" fill="none" stroke="url(#rg)" stroke-width="3"/><path d="M0.6,21.5 L0.6,12.6 L9.4,12.6 Z" fill="#1a6de0"/></svg>
<div class="t " style="left:1416px;top:439.81px;font-size:17.8px;color:#444;font-weight:400;">29/9/20, 08:00</div>
<div class="t" style="left:419px;top:483.28px;font-size:17.8px;color:#444;width:415px;overflow:hidden">Cambio de plan<span style="color:#a6a6a6"> - Cambio de plan a uno más eficiente</span></div>
<svg class="a" style="left:1233px;top:476.6px;" width="22" height="21" viewBox="0 0 22 21"><defs><linearGradient id="cgagenda476" x1="0" x2="1"><stop offset="0" stop-color="#dcebfb"/><stop offset="1" stop-color="#5a8fd6"/></linearGradient></defs><rect x="0.5" y="0.5" width="21" height="20" fill="#d9e7f8" stroke="#4a7cc8"/><rect x="1" y="1" width="20" height="6" fill="url(#cgagenda476)"/><rect x="1" y="6.5" width="20" height="1.2" fill="#3b6299"/><rect x="4" y="8" width="0.8" height="12" fill="#fff" opacity="0.8"/><rect x="7" y="8" width="0.8" height="12" fill="#fff" opacity="0.8"/><rect x="10" y="8" width="0.8" height="12" fill="#fff" opacity="0.8"/><rect x="13" y="8" width="0.8" height="12" fill="#fff" opacity="0.8"/><rect x="16" y="8" width="0.8" height="12" fill="#fff" opacity="0.8"/><rect x="19" y="8" width="0.8" height="12" fill="#fff" opacity="0.8"/><rect x="1" y="11" width="20" height="0.8" fill="#fff" opacity="0.8"/><rect x="1" y="14" width="20" height="0.8" fill="#fff" opacity="0.8"/><rect x="1" y="17" width="20" height="0.8" fill="#fff" opacity="0.8"/><rect x="1" y="19.5" width="20" height="0.8" fill="#fff" opacity="0.8"/><path d="M21.5,0.5 V20.5 H0.5" fill="none" stroke="#3b6299" stroke-width="1.2"/></svg>
<div class="t " style="left:1262.5px;top:483.28px;font-size:17.8px;color:#444;font-weight:400;">Agenda</div>
<svg class="a" style="left:1384px;top:479.45px;" width="22" height="22" viewBox="0 0 22 22"><defs><linearGradient id="rg" x1="0" y1="0" x2="1" y2="1"><stop offset="0" stop-color="#3aaaf6"/><stop offset="1" stop-color="#1d74e2"/></linearGradient></defs><path d="M1.8,8.8 Q4.5,2.2 10.8,2.2 Q15,2.2 17.5,5.2" fill="none" stroke="url(#rg)" stroke-width="3"/><path d="M21,0.3 L21,9.2 L12.2,9.2 Z" fill="#1a6de0"/><path d="M19.8,13 Q17,19.6 10.8,19.6 Q6.6,19.6 4.2,16.6" fill="none" stroke="url(#rg)" stroke-width="3"/><path d="M0.6,21.5 L0.6,12.6 L9.4,12.6 Z" fill="#1a6de0"/></svg>
<div class="t " style="left:1416px;top:483.28px;font-size:17.8px;color:#444;font-weight:400;">30/9/20, 00:00</div>
<div class="t" style="left:419px;top:526.75px;font-size:17.8px;color:#444;width:415px;overflow:hidden">Mantenimiento de redes eléctricas<span style="color:#a6a6a6"> - Mantenimiento</span></div>
<svg class="a" style="left:1233px;top:520.07px;" width="22" height="21" viewBox="0 0 22 21"><defs><linearGradient id="cgagenda520" x1="0" x2="1"><stop offset="0" stop-color="#dcebfb"/><stop offset="1" stop-color="#5a8fd6"/></linearGradient></defs><rect x="0.5" y="0.5" width="21" height="20" fill="#d9e7f8" stroke="#4a7cc8"/><rect x="1" y="1" width="20" height="6" fill="url(#cgagenda520)"/><rect x="1" y="6.5" width="20" height="1.2" fill="#3b6299"/><rect x="4" y="8" width="0.8" height="12" fill="#fff" opacity="0.8"/><rect x="7" y="8" width="0.8" height="12" fill="#fff" opacity="0.8"/><rect x="10" y="8" width="0.8" height="12" fill="#fff" opacity="0.8"/><rect x="13" y="8" width="0.8" height="12" fill="#fff" opacity="0.8"/><rect x="16" y="8" width="0.8" height="12" fill="#fff" opacity="0.8"/><rect x="19" y="8" width="0.8" height="12" fill="#fff" opacity="0.8"/><rect x="1" y="11" width="20" height="0.8" fill="#fff" opacity="0.8"/><rect x="1" y="14" width="20" height="0.8" fill="#fff" opacity="0.8"/><rect x="1" y="17" width="20" height="0.8" fill="#fff" opacity="0.8"/><rect x="1" y="19.5" width="20" height="0.8" fill="#fff" opacity="0.8"/><path d="M21.5,0.5 V20.5 H0.5" fill="none" stroke="#3b6299" stroke-width="1.2"/></svg>
<div class="t " style="left:1262.5px;top:526.75px;font-size:17.8px;color:#444;font-weight:400;">Agenda</div>
<div class="t " style="left:1416px;top:526.75px;font-size:17.8px;color:#444;font-weight:400;">30/9/20, 07:00</div>
<div class="t" style="left:419px;top:570.22px;font-size:17.8px;color:#444;width:415px;overflow:hidden">Revisión de equipos<span style="color:#a6a6a6"> - Por favor tener listo para respetar</span></div>
<svg class="a" style="left:1233px;top:563.54px;" width="22" height="21" viewBox="0 0 22 21"><defs><linearGradient id="cgagenda563" x1="0" x2="1"><stop offset="0" stop-color="#dcebfb"/><stop offset="1" stop-color="#5a8fd6"/></linearGradient></defs><rect x="0.5" y="0.5" width="21" height="20" fill="#d9e7f8" stroke="#4a7cc8"/><rect x="1" y="1" width="20" height="6" fill="url(#cgagenda563)"/><rect x="1" y="6.5" width="20" height="1.2" fill="#3b6299"/><rect x="4" y="8" width="0.8" height="12" fill="#fff" opacity="0.8"/><rect x="7" y="8" width="0.8" height="12" fill="#fff" opacity="0.8"/><rect x="10" y="8" width="0.8" height="12" fill="#fff" opacity="0.8"/><rect x="13" y="8" width="0.8" height="12" fill="#fff" opacity="0.8"/><rect x="16" y="8" width="0.8" height="12" fill="#fff" opacity="0.8"/><rect x="19" y="8" width="0.8" height="12" fill="#fff" opacity="0.8"/><rect x="1" y="11" width="20" height="0.8" fill="#fff" opacity="0.8"/><rect x="1" y="14" width="20" height="0.8" fill="#fff" opacity="0.8"/><rect x="1" y="17" width="20" height="0.8" fill="#fff" opacity="0.8"/><rect x="1" y="19.5" width="20" height="0.8" fill="#fff" opacity="0.8"/><path d="M21.5,0.5 V20.5 H0.5" fill="none" stroke="#3b6299" stroke-width="1.2"/></svg>
<div class="t " style="left:1262.5px;top:570.22px;font-size:17.8px;color:#444;font-weight:400;">Agenda</div>
<div class="t " style="left:1416px;top:570.22px;font-size:17.8px;color:#444;font-weight:400;">1/10/20, 07:00</div>
<div class="t" style="left:419px;top:613.69px;font-size:17.8px;color:#444;width:415px;overflow:hidden">Charla al personal<span style="color:#a6a6a6"> - Charla al personal sobre estrés laboral</span></div>
<svg class="a" style="left:1233px;top:607.01px;" width="22" height="21" viewBox="0 0 22 21"><defs><linearGradient id="cgagenda607" x1="0" x2="1"><stop offset="0" stop-color="#dcebfb"/><stop offset="1" stop-color="#5a8fd6"/></linearGradient></defs><rect x="0.5" y="0.5" width="21" height="20" fill="#d9e7f8" stroke="#4a7cc8"/><rect x="1" y="1" width="20" height="6" fill="url(#cgagenda607)"/><rect x="1" y="6.5" width="20" height="1.2" fill="#3b6299"/><rect x="4" y="8" width="0.8" height="12" fill="#fff" opacity="0.8"/><rect x="7" y="8" width="0.8" height="12" fill="#fff" opacity="0.8"/><rect x="10" y="8" width="0.8" height="12" fill="#fff" opacity="0.8"/><rect x="13" y="8" width="0.8" height="12" fill="#fff" opacity="0.8"/><rect x="16" y="8" width="0.8" height="12" fill="#fff" opacity="0.8"/><rect x="19" y="8" width="0.8" height="12" fill="#fff" opacity="0.8"/><rect x="1" y="11" width="20" height="0.8" fill="#fff" opacity="0.8"/><rect x="1" y="14" width="20" height="0.8" fill="#fff" opacity="0.8"/><rect x="1" y="17" width="20" height="0.8" fill="#fff" opacity="0.8"/><rect x="1" y="19.5" width="20" height="0.8" fill="#fff" opacity="0.8"/><path d="M21.5,0.5 V20.5 H0.5" fill="none" stroke="#3b6299" stroke-width="1.2"/></svg>
<div class="t " style="left:1262.5px;top:613.69px;font-size:17.8px;color:#444;font-weight:400;">Agenda</div>
<div class="t " style="left:1416px;top:613.69px;font-size:17.8px;color:#444;font-weight:400;">1/10/20, 08:00</div>
<div class="t" style="left:419px;top:657.16px;font-size:17.8px;color:#444;width:415px;overflow:hidden">Reunion Proyecto<span style="color:#a6a6a6"> - El siguiente contenido es una nueva</span></div>
<div class="t " style="left:836.6px;top:657.16px;font-size:17.8px;color:#333;font-weight:400;letter-spacing:-0.55px">En Linea</div>
<div class="t " style="left:1105px;top:657.16px;font-size:17.8px;color:#444;font-weight:400;">Aceptado</div>
<svg class="a" style="left:1233px;top:650.48px;" width="22" height="21" viewBox="0 0 22 21"><defs><linearGradient id="cgagenda650" x1="0" x2="1"><stop offset="0" stop-color="#dcebfb"/><stop offset="1" stop-color="#5a8fd6"/></linearGradient></defs><rect x="0.5" y="0.5" width="21" height="20" fill="#d9e7f8" stroke="#4a7cc8"/><rect x="1" y="1" width="20" height="6" fill="url(#cgagenda650)"/><rect x="1" y="6.5" width="20" height="1.2" fill="#3b6299"/><rect x="4" y="8" width="0.8" height="12" fill="#fff" opacity="0.8"/><rect x="7" y="8" width="0.8" height="12" fill="#fff" opacity="0.8"/><rect x="10" y="8" width="0.8" height="12" fill="#fff" opacity="0.8"/><rect x="13" y="8" width="0.8" height="12" fill="#fff" opacity="0.8"/><rect x="16" y="8" width="0.8" height="12" fill="#fff" opacity="0.8"/><rect x="19" y="8" width="0.8" height="12" fill="#fff" opacity="0.8"/><rect x="1" y="11" width="20" height="0.8" fill="#fff" opacity="0.8"/><rect x="1" y="14" width="20" height="0.8" fill="#fff" opacity="0.8"/><rect x="1" y="17" width="20" height="0.8" fill="#fff" opacity="0.8"/><rect x="1" y="19.5" width="20" height="0.8" fill="#fff" opacity="0.8"/><path d="M21.5,0.5 V20.5 H0.5" fill="none" stroke="#3b6299" stroke-width="1.2"/></svg>
<div class="t " style="left:1262.5px;top:657.16px;font-size:17.8px;color:#444;font-weight:400;">Agenda</div>
<svg class="a" style="left:1384px;top:653.33px;" width="22" height="22" viewBox="0 0 22 22"><defs><linearGradient id="rg" x1="0" y1="0" x2="1" y2="1"><stop offset="0" stop-color="#3aaaf6"/><stop offset="1" stop-color="#1d74e2"/></linearGradient></defs><path d="M1.8,8.8 Q4.5,2.2 10.8,2.2 Q15,2.2 17.5,5.2" fill="none" stroke="url(#rg)" stroke-width="3"/><path d="M21,0.3 L21,9.2 L12.2,9.2 Z" fill="#1a6de0"/><path d="M19.8,13 Q17,19.6 10.8,19.6 Q6.6,19.6 4.2,16.6" fill="none" stroke="url(#rg)" stroke-width="3"/><path d="M0.6,21.5 L0.6,12.6 L9.4,12.6 Z" fill="#1a6de0"/></svg>
<div class="t " style="left:1416px;top:657.16px;font-size:17.8px;color:#444;font-weight:400;">1/10/20, 09:00</div>
<div class="t" style="left:419px;top:700.63px;font-size:17.8px;color:#444;width:415px;overflow:hidden">Mantenimiento de redes eléctricas<span style="color:#a6a6a6"> - Mantenimiento</span></div>
<svg class="a" style="left:1233px;top:693.95px;" width="22" height="21" viewBox="0 0 22 21"><defs><linearGradient id="cgagenda693" x1="0" x2="1"><stop offset="0" stop-color="#dcebfb"/><stop offset="1" stop-color="#5a8fd6"/></linearGradient></defs><rect x="0.5" y="0.5" width="21" height="20" fill="#d9e7f8" stroke="#4a7cc8"/><rect x="1" y="1" width="20" height="6" fill="url(#cgagenda693)"/><rect x="1" y="6.5" width="20" height="1.2" fill="#3b6299"/><rect x="4" y="8" width="0.8" height="12" fill="#fff" opacity="0.8"/><rect x="7" y="8" width="0.8" height="12" fill="#fff" opacity="0.8"/><rect x="10" y="8" width="0.8" height="12" fill="#fff" opacity="0.8"/><rect x="13" y="8" width="0.8" height="12" fill="#fff" opacity="0.8"/><rect x="16" y="8" width="0.8" height="12" fill="#fff" opacity="0.8"/><rect x="19" y="8" width="0.8" height="12" fill="#fff" opacity="0.8"/><rect x="1" y="11" width="20" height="0.8" fill="#fff" opacity="0.8"/><rect x="1" y="14" width="20" height="0.8" fill="#fff" opacity="0.8"/><rect x="1" y="17" width="20" height="0.8" fill="#fff" opacity="0.8"/><rect x="1" y="19.5" width="20" height="0.8" fill="#fff" opacity="0.8"/><path d="M21.5,0.5 V20.5 H0.5" fill="none" stroke="#3b6299" stroke-width="1.2"/></svg>
<div class="t " style="left:1262.5px;top:700.63px;font-size:17.8px;color:#444;font-weight:400;">Agenda</div>
<svg class="a" style="left:1384px;top:696.8px;" width="22" height="22" viewBox="0 0 22 22"><defs><linearGradient id="rg" x1="0" y1="0" x2="1" y2="1"><stop offset="0" stop-color="#3aaaf6"/><stop offset="1" stop-color="#1d74e2"/></linearGradient></defs><path d="M1.8,8.8 Q4.5,2.2 10.8,2.2 Q15,2.2 17.5,5.2" fill="none" stroke="url(#rg)" stroke-width="3"/><path d="M21,0.3 L21,9.2 L12.2,9.2 Z" fill="#1a6de0"/><path d="M19.8,13 Q17,19.6 10.8,19.6 Q6.6,19.6 4.2,16.6" fill="none" stroke="url(#rg)" stroke-width="3"/><path d="M0.6,21.5 L0.6,12.6 L9.4,12.6 Z" fill="#1a6de0"/></svg>
<div class="t " style="left:1416px;top:700.63px;font-size:17.8px;color:#444;font-weight:400;">2/10/20, 07:00</div>
<div class="t" style="left:419px;top:744.10px;font-size:17.8px;color:#444;width:415px;overflow:hidden">Compra de &nbsp;cuentas<span style="color:#a6a6a6"> - Tener todo listo para cierre de</span></div>
<svg class="a" style="left:1233px;top:737.42px;" width="22" height="21" viewBox="0 0 22 21"><defs><linearGradient id="cgagenda737" x1="0" x2="1"><stop offset="0" stop-color="#dcebfb"/><stop offset="1" stop-color="#5a8fd6"/></linearGradient></defs><rect x="0.5" y="0.5" width="21" height="20" fill="#d9e7f8" stroke="#4a7cc8"/><rect x="1" y="1" width="20" height="6" fill="url(#cgagenda737)"/><rect x="1" y="6.5" width="20" height="1.2" fill="#3b6299"/><rect x="4" y="8" width="0.8" height="12" fill="#fff" opacity="0.8"/><rect x="7" y="8" width="0.8" height="12" fill="#fff" opacity="0.8"/><rect x="10" y="8" width="0.8" height="12" fill="#fff" opacity="0.8"/><rect x="13" y="8" width="0.8" height="12" fill="#fff" opacity="0.8"/><rect x="16" y="8" width="0.8" height="12" fill="#fff" opacity="0.8"/><rect x="19" y="8" width="0.8" height="12" fill="#fff" opacity="0.8"/><rect x="1" y="11" width="20" height="0.8" fill="#fff" opacity="0.8"/><rect x="1" y="14" width="20" height="0.8" fill="#fff" opacity="0.8"/><rect x="1" y="17" width="20" height="0.8" fill="#fff" opacity="0.8"/><rect x="1" y="19.5" width="20" height="0.8" fill="#fff" opacity="0.8"/><path d="M21.5,0.5 V20.5 H0.5" fill="none" stroke="#3b6299" stroke-width="1.2"/></svg>
<div class="t " style="left:1262.5px;top:744.10px;font-size:17.8px;color:#444;font-weight:400;">Agenda</div>
<div class="t " style="left:1416px;top:744.10px;font-size:17.8px;color:#444;font-weight:400;">2/10/20, 08:00</div>
<div class="t" style="left:419px;top:787.57px;font-size:17.8px;color:#444;width:415px;overflow:hidden">Revisión de CPU<span style="color:#a6a6a6"> - Por favor realizar mantenimiento de</span></div>
<svg class="a" style="left:1233px;top:780.89px;" width="22" height="21" viewBox="0 0 22 21"><defs><linearGradient id="cgagenda780" x1="0" x2="1"><stop offset="0" stop-color="#dcebfb"/><stop offset="1" stop-color="#5a8fd6"/></linearGradient></defs><rect x="0.5" y="0.5" width="21" height="20" fill="#d9e7f8" stroke="#4a7cc8"/><rect x="1" y="1" width="20" height="6" fill="url(#cgagenda780)"/><rect x="1" y="6.5" width="20" height="1.2" fill="#3b6299"/><rect x="4" y="8" width="0.8" height="12" fill="#fff" opacity="0.8"/><rect x="7" y="8" width="0.8" height="12" fill="#fff" opacity="0.8"/><rect x="10" y="8" width="0.8" height="12" fill="#fff" opacity="0.8"/><rect x="13" y="8" width="0.8" height="12" fill="#fff" opacity="0.8"/><rect x="16" y="8" width="0.8" height="12" fill="#fff" opacity="0.8"/><rect x="19" y="8" width="0.8" height="12" fill="#fff" opacity="0.8"/><rect x="1" y="11" width="20" height="0.8" fill="#fff" opacity="0.8"/><rect x="1" y="14" width="20" height="0.8" fill="#fff" opacity="0.8"/><rect x="1" y="17" width="20" height="0.8" fill="#fff" opacity="0.8"/><rect x="1" y="19.5" width="20" height="0.8" fill="#fff" opacity="0.8"/><path d="M21.5,0.5 V20.5 H0.5" fill="none" stroke="#3b6299" stroke-width="1.2"/></svg>
<div class="t " style="left:1262.5px;top:787.57px;font-size:17.8px;color:#444;font-weight:400;">Agenda</div>
<div class="t " style="left:1416px;top:787.57px;font-size:17.8px;color:#444;font-weight:400;">3/10/20, 09:00</div>
<div class="t" style="left:419px;top:831.04px;font-size:17.8px;color:#444;width:415px;overflow:hidden">Venta de CE<span style="color:#a6a6a6"> - Venta de correo empresarial</span></div>
<svg class="a" style="left:1233px;top:824.36px;" width="22" height="21" viewBox="0 0 22 21"><defs><linearGradient id="cgagenda824" x1="0" x2="1"><stop offset="0" stop-color="#dcebfb"/><stop offset="1" stop-color="#5a8fd6"/></linearGradient></defs><rect x="0.5" y="0.5" width="21" height="20" fill="#d9e7f8" stroke="#4a7cc8"/><rect x="1" y="1" width="20" height="6" fill="url(#cgagenda824)"/><rect x="1" y="6.5" width="20" height="1.2" fill="#3b6299"/><rect x="4" y="8" width="0.8" height="12" fill="#fff" opacity="0.8"/><rect x="7" y="8" width="0.8" height="12" fill="#fff" opacity="0.8"/><rect x="10" y="8" width="0.8" height="12" fill="#fff" opacity="0.8"/><rect x="13" y="8" width="0.8" height="12" fill="#fff" opacity="0.8"/><rect x="16" y="8" width="0.8" height="12" fill="#fff" opacity="0.8"/><rect x="19" y="8" width="0.8" height="12" fill="#fff" opacity="0.8"/><rect x="1" y="11" width="20" height="0.8" fill="#fff" opacity="0.8"/><rect x="1" y="14" width="20" height="0.8" fill="#fff" opacity="0.8"/><rect x="1" y="17" width="20" height="0.8" fill="#fff" opacity="0.8"/><rect x="1" y="19.5" width="20" height="0.8" fill="#fff" opacity="0.8"/><path d="M21.5,0.5 V20.5 H0.5" fill="none" stroke="#3b6299" stroke-width="1.2"/></svg>
<div class="t " style="left:1262.5px;top:831.04px;font-size:17.8px;color:#444;font-weight:400;">Agenda</div>
<svg class="a" style="left:1384px;top:827.21px;" width="22" height="22" viewBox="0 0 22 22"><defs><linearGradient id="rg" x1="0" y1="0" x2="1" y2="1"><stop offset="0" stop-color="#3aaaf6"/><stop offset="1" stop-color="#1d74e2"/></linearGradient></defs><path d="M1.8,8.8 Q4.5,2.2 10.8,2.2 Q15,2.2 17.5,5.2" fill="none" stroke="url(#rg)" stroke-width="3"/><path d="M21,0.3 L21,9.2 L12.2,9.2 Z" fill="#1a6de0"/><path d="M19.8,13 Q17,19.6 10.8,19.6 Q6.6,19.6 4.2,16.6" fill="none" stroke="url(#rg)" stroke-width="3"/><path d="M0.6,21.5 L0.6,12.6 L9.4,12.6 Z" fill="#1a6de0"/></svg>
<div class="t " style="left:1416px;top:831.04px;font-size:17.8px;color:#444;font-weight:400;">3/10/20, 14:00</div>
<div class="t" style="left:419px;top:874.51px;font-size:17.8px;color:#444;width:415px;overflow:hidden">Facturación del presente mes<span style="color:#a6a6a6"> - Factura de cada mes</span></div>
<svg class="a" style="left:1233px;top:867.83px;" width="22" height="21" viewBox="0 0 22 21"><defs><linearGradient id="cgagenda867" x1="0" x2="1"><stop offset="0" stop-color="#dcebfb"/><stop offset="1" stop-color="#5a8fd6"/></linearGradient></defs><rect x="0.5" y="0.5" width="21" height="20" fill="#d9e7f8" stroke="#4a7cc8"/><rect x="1" y="1" width="20" height="6" fill="url(#cgagenda867)"/><rect x="1" y="6.5" width="20" height="1.2" fill="#3b6299"/><rect x="4" y="8" width="0.8" height="12" fill="#fff" opacity="0.8"/><rect x="7" y="8" width="0.8" height="12" fill="#fff" opacity="0.8"/><rect x="10" y="8" width="0.8" height="12" fill="#fff" opacity="0.8"/><rect x="13" y="8" width="0.8" height="12" fill="#fff" opacity="0.8"/><rect x="16" y="8" width="0.8" height="12" fill="#fff" opacity="0.8"/><rect x="19" y="8" width="0.8" height="12" fill="#fff" opacity="0.8"/><rect x="1" y="11" width="20" height="0.8" fill="#fff" opacity="0.8"/><rect x="1" y="14" width="20" height="0.8" fill="#fff" opacity="0.8"/><rect x="1" y="17" width="20" height="0.8" fill="#fff" opacity="0.8"/><rect x="1" y="19.5" width="20" height="0.8" fill="#fff" opacity="0.8"/><path d="M21.5,0.5 V20.5 H0.5" fill="none" stroke="#3b6299" stroke-width="1.2"/></svg>
<div class="t " style="left:1262.5px;top:874.51px;font-size:17.8px;color:#444;font-weight:400;">Agenda</div>
<svg class="a" style="left:1384px;top:870.68px;" width="22" height="22" viewBox="0 0 22 22"><defs><linearGradient id="rg" x1="0" y1="0" x2="1" y2="1"><stop offset="0" stop-color="#3aaaf6"/><stop offset="1" stop-color="#1d74e2"/></linearGradient></defs><path d="M1.8,8.8 Q4.5,2.2 10.8,2.2 Q15,2.2 17.5,5.2" fill="none" stroke="url(#rg)" stroke-width="3"/><path d="M21,0.3 L21,9.2 L12.2,9.2 Z" fill="#1a6de0"/><path d="M19.8,13 Q17,19.6 10.8,19.6 Q6.6,19.6 4.2,16.6" fill="none" stroke="url(#rg)" stroke-width="3"/><path d="M0.6,21.5 L0.6,12.6 L9.4,12.6 Z" fill="#1a6de0"/></svg>
<div class="t " style="left:1416px;top:874.51px;font-size:17.8px;color:#444;font-weight:400;">5/10/20, 08:00</div>
<div class="t" style="left:419px;top:917.98px;font-size:17.8px;color:#444;width:415px;overflow:hidden">Pedido de aves de corral a empresa Avícola la Milagros</div>
<svg class="a" style="left:1233px;top:911.3px;" width="22" height="21" viewBox="0 0 22 21"><defs><linearGradient id="cgagenda911" x1="0" x2="1"><stop offset="0" stop-color="#dcebfb"/><stop offset="1" stop-color="#5a8fd6"/></linearGradient></defs><rect x="0.5" y="0.5" width="21" height="20" fill="#d9e7f8" stroke="#4a7cc8"/><rect x="1" y="1" width="20" height="6" fill="url(#cgagenda911)"/><rect x="1" y="6.5" width="20" height="1.2" fill="#3b6299"/><rect x="4" y="8" width="0.8" height="12" fill="#fff" opacity="0.8"/><rect x="7" y="8" width="0.8" height="12" fill="#fff" opacity="0.8"/><rect x="10" y="8" width="0.8" height="12" fill="#fff" opacity="0.8"/><rect x="13" y="8" width="0.8" height="12" fill="#fff" opacity="0.8"/><rect x="16" y="8" width="0.8" height="12" fill="#fff" opacity="0.8"/><rect x="19" y="8" width="0.8" height="12" fill="#fff" opacity="0.8"/><rect x="1" y="11" width="20" height="0.8" fill="#fff" opacity="0.8"/><rect x="1" y="14" width="20" height="0.8" fill="#fff" opacity="0.8"/><rect x="1" y="17" width="20" height="0.8" fill="#fff" opacity="0.8"/><rect x="1" y="19.5" width="20" height="0.8" fill="#fff" opacity="0.8"/><path d="M21.5,0.5 V20.5 H0.5" fill="none" stroke="#3b6299" stroke-width="1.2"/></svg>
<div class="t " style="left:1262.5px;top:917.98px;font-size:17.8px;color:#444;font-weight:400;">Agenda</div>
<div class="t " style="left:1416px;top:917.98px;font-size:17.8px;color:#444;font-weight:400;">5/10/20, 09:00</div>
<div class="t " style="left:38px;top:169.95px;font-size:22.5px;color:#3a3a3a;font-weight:400;">Agendas</div>
<div class="a" style="left:30px;top:210px;width:21px;height:21px;border:1px solid #333"></div>
<div class="t " style="left:97.6px;top:214.13px;font-size:17.8px;color:#3a3a3a;font-weight:400;">Agenda</div>
<div class="a" style="left:30px;top:248px;width:21px;height:21px;border:1px solid #333"></div>
<div class="t " style="left:96.6px;top:250.73px;font-size:17.8px;color:#3a3a3a;font-weight:400;letter-spacing:-0.45px">Papelera</div>
<div class="t " style="left:37.6px;top:300.05px;font-size:22.5px;color:#3a3a3a;font-weight:400;letter-spacing:-0.12px">Búsquedas</div>
<div class="t " style="left:37.6px;top:340.85px;font-size:22.5px;color:#3a3a3a;font-weight:400;">Etiquetas</div>
<svg class="a" style="left:31px;top:380.6px;" width="23" height="23" viewBox="0 0 23 23"><path d="M0.6,13.6 L12.2,1.4 L17.9,1.4 L20.7,4.2 L20.7,8.7 L7.9,21.3 Z" fill="#a27cd0" stroke="#4a3470" stroke-width="1"/><path d="M2.2,13.6 L12.8,2.6 L17.2,2.6" fill="none" stroke="#d2b4f0" stroke-width="1" opacity="0.7"/><circle cx="16.3" cy="4.9" r="1.5" fill="#111"/><path d="M16.3,4.9 L21.7,0" stroke="#333" stroke-width="1"/></svg>
<div class="t " style="left:66.8px;top:385.83px;font-size:17.8px;color:#3a3a3a;font-weight:400;letter-spacing:0.25px">Importante</div>
<svg class="a" style="left:31px;top:420.43px;" width="23" height="23" viewBox="0 0 23 23"><path d="M0.6,13.6 L12.2,1.4 L17.9,1.4 L20.7,4.2 L20.7,8.7 L7.9,21.3 Z" fill="#3cc6cc" stroke="#1f6a70" stroke-width="1"/><path d="M2.2,13.6 L12.8,2.6 L17.2,2.6" fill="none" stroke="#a8f0f2" stroke-width="1" opacity="0.7"/><circle cx="16.3" cy="4.9" r="1.5" fill="#111"/><path d="M16.3,4.9 L21.7,0" stroke="#333" stroke-width="1"/></svg>
<div class="t " style="left:66.8px;top:425.66px;font-size:17.8px;color:#3a3a3a;font-weight:400;letter-spacing:0.05px">Prioritario</div>
<svg class="a" style="left:31px;top:460.26px;" width="23" height="23" viewBox="0 0 23 23"><path d="M0.6,13.6 L12.2,1.4 L17.9,1.4 L20.7,4.2 L20.7,8.7 L7.9,21.3 Z" fill="#e0a452" stroke="#6a4a20" stroke-width="1"/><path d="M2.2,13.6 L12.8,2.6 L17.2,2.6" fill="none" stroke="#f8d8a0" stroke-width="1" opacity="0.7"/><circle cx="16.3" cy="4.9" r="1.5" fill="#111"/><path d="M16.3,4.9 L21.7,0" stroke="#333" stroke-width="1"/></svg>
<div class="t " style="left:66.8px;top:465.49px;font-size:17.8px;color:#3a3a3a;font-weight:400;letter-spacing:-0.2px">Proyecto</div>
<svg class="a" style="left:31px;top:500.09px;" width="23" height="23" viewBox="0 0 23 23"><path d="M0.6,13.6 L12.2,1.4 L17.9,1.4 L20.7,4.2 L20.7,8.7 L7.9,21.3 Z" fill="#4f86d8" stroke="#1f3f78" stroke-width="1"/><path d="M2.2,13.6 L12.8,2.6 L17.2,2.6" fill="none" stroke="#a8c8f4" stroke-width="1" opacity="0.7"/><circle cx="16.3" cy="4.9" r="1.5" fill="#111"/><path d="M16.3,4.9 L21.7,0" stroke="#333" stroke-width="1"/></svg>
<div class="t " style="left:66.8px;top:505.32px;font-size:17.8px;color:#3a3a3a;font-weight:400;letter-spacing:-0.6px">Rechazado</div>
<svg class="a" style="left:31px;top:539.92px;" width="23" height="23" viewBox="0 0 23 23"><path d="M0.6,13.6 L12.2,1.4 L17.9,1.4 L20.7,4.2 L20.7,8.7 L7.9,21.3 Z" fill="#b23cc8" stroke="#4a1a58" stroke-width="1"/><path d="M2.2,13.6 L12.8,2.6 L17.2,2.6" fill="none" stroke="#e8a0f4" stroke-width="1" opacity="0.7"/><circle cx="16.3" cy="4.9" r="1.5" fill="#111"/><path d="M16.3,4.9 L21.7,0" stroke="#333" stroke-width="1"/></svg>
<div class="t " style="left:66.8px;top:545.15px;font-size:17.8px;color:#3a3a3a;font-weight:400;letter-spacing:-0.35px">Reunion</div>
<svg class="a" style="left:31px;top:579.75px;" width="23" height="23" viewBox="0 0 23 23"><path d="M0.6,13.6 L12.2,1.4 L17.9,1.4 L20.7,4.2 L20.7,8.7 L7.9,21.3 Z" fill="#5bb08e" stroke="#22503c" stroke-width="1"/><path d="M2.2,13.6 L12.8,2.6 L17.2,2.6" fill="none" stroke="#a8e4cc" stroke-width="1" opacity="0.7"/><circle cx="16.3" cy="4.9" r="1.5" fill="#111"/><path d="M16.3,4.9 L21.7,0" stroke="#333" stroke-width="1"/></svg>
<div class="t " style="left:66.8px;top:584.98px;font-size:17.8px;color:#3a3a3a;font-weight:400;letter-spacing:-0.55px">Revisión</div>
<svg class="a" style="left:31px;top:619.58px;" width="23" height="23" viewBox="0 0 23 23"><path d="M0.6,13.6 L12.2,1.4 L17.9,1.4 L20.7,4.2 L20.7,8.7 L7.9,21.3 Z" fill="#e0e038" stroke="#707010" stroke-width="1"/><path d="M2.2,13.6 L12.8,2.6 L17.2,2.6" fill="none" stroke="#f8f8a0" stroke-width="1" opacity="0.7"/><circle cx="16.3" cy="4.9" r="1.5" fill="#111"/><path d="M16.3,4.9 L21.7,0" stroke="#333" stroke-width="1"/></svg>
<div class="t " style="left:66.8px;top:624.81px;font-size:17.8px;color:#3a3a3a;font-weight:400;letter-spacing:0px">Terminado</div>
<svg class="a" style="left:31px;top:659.41px;" width="23" height="23" viewBox="0 0 23 23"><path d="M0.6,13.6 L12.2,1.4 L17.9,1.4 L20.7,4.2 L20.7,8.7 L7.9,21.3 Z" fill="#de5a5a" stroke="#702020" stroke-width="1"/><path d="M2.2,13.6 L12.8,2.6 L17.2,2.6" fill="none" stroke="#f8b0b0" stroke-width="1" opacity="0.7"/><circle cx="16.3" cy="4.9" r="1.5" fill="#111"/><path d="M16.3,4.9 L21.7,0" stroke="#333" stroke-width="1"/></svg>
<div class="t " style="left:66.8px;top:664.64px;font-size:17.8px;color:#3a3a3a;font-weight:400;letter-spacing:0px">Urgente</div>
<div class="a" style="left:5px;top:703px;width:331px;height:1px;background:#b0b0b0"></div>
<div class="t" style="left:5px;width:329px;text-align:center;top:718.93px;font-size:17.8px;color:#333">Septiembre de 2020</div>
<div class="a" style="left:5px;top:769px;width:331px;height:1px;background:#e8e8e8"></div>
<div class="t" style="left:-1.8px;width:60px;text-align:center;top:748.93px;font-size:17.8px;color:#999">D</div>
<div class="t" style="left:45.2px;width:60px;text-align:center;top:748.93px;font-size:17.8px;color:#999">L</div>
<div class="t" style="left:91.6px;width:60px;text-align:center;top:748.93px;font-size:17.8px;color:#999">M</div>
<div class="t" style="left:138.5px;width:60px;text-align:center;top:748.93px;font-size:17.8px;color:#999">M</div>
<div class="t" style="left:184.5px;width:60px;text-align:center;top:748.93px;font-size:17.8px;color:#999">J</div>
<div class="t" style="left:231.9px;width:60px;text-align:center;top:748.93px;font-size:17.8px;color:#999">V</div>
<div class="t" style="left:280.8px;width:60px;text-align:center;top:748.93px;font-size:17.8px;color:#999">S</div>
<div class="t" style="left:-1.8px;width:60px;text-align:center;top:776.93px;font-size:17.8px;color:#999;font-weight:400">30</div>
<div class="t" style="left:45.2px;width:60px;text-align:center;top:776.93px;font-size:17.8px;color:#999;font-weight:700">31</div>
<div class="t" style="left:91.6px;width:60px;text-align:center;top:776.93px;font-size:17.8px;color:#222;font-weight:700">1</div>
<div class="t" style="left:138.5px;width:60px;text-align:center;top:776.93px;font-size:17.8px;color:#222;font-weight:700">2</div>
<div class="t" style="left:184.5px;width:60px;text-align:center;top:776.93px;font-size:17.8px;color:#222;font-weight:700">3</div>
<div class="t" style="left:231.9px;width:60px;text-align:center;top:776.93px;font-size:17.8px;color:#222;font-weight:700">4</div>
<div class="t" style="left:280.8px;width:60px;text-align:center;top:776.93px;font-size:17.8px;color:#222;font-weight:700">5</div>
<div class="t" style="left:-1.8px;width:60px;text-align:center;top:806.83px;font-size:17.8px;color:#222;font-weight:400">6</div>
<div class="t" style="left:45.2px;width:60px;text-align:center;top:806.83px;font-size:17.8px;color:#222;font-weight:700">7</div>
<div class="t" style="left:91.6px;width:60px;text-align:center;top:806.83px;font-size:17.8px;color:#222;font-weight:700">8</div>
<div class="t" style="left:138.5px;width:60px;text-align:center;top:806.83px;font-size:17.8px;color:#222;font-weight:700">9</div>
<div class="t" style="left:184.5px;width:60px;text-align:center;top:806.83px;font-size:17.8px;color:#222;font-weight:700">10</div>
<div class="t" style="left:231.9px;width:60px;text-align:center;top:806.83px;font-size:17.8px;color:#222;font-weight:700">11</div>
<div class="t" style="left:280.8px;width:60px;text-align:center;top:806.83px;font-size:17.8px;color:#222;font-weight:700">12</div>
<div class="t" style="left:-1.8px;width:60px;text-align:center;top:836.73px;font-size:17.8px;color:#222;font-weight:400">13</div>
<div class="t" style="left:45.2px;width:60px;text-align:center;top:836.73px;font-size:17.8px;color:#222;font-weight:700">14</div>
<div class="t" style="left:91.6px;width:60px;text-align:center;top:836.73px;font-size:17.8px;color:#222;font-weight:700">15</div>
<div class="t" style="left:138.5px;width:60px;text-align:center;top:836.73px;font-size:17.8px;color:#222;font-weight:700">16</div>
<div class="t" style="left:184.5px;width:60px;text-align:center;top:836.73px;font-size:17.8px;color:#222;font-weight:700">17</div>
<div class="t" style="left:231.9px;width:60px;text-align:center;top:836.73px;font-size:17.8px;color:#222;font-weight:700">18</div>
<div class="t" style="left:280.8px;width:60px;text-align:center;top:836.73px;font-size:17.8px;color:#222;font-weight:700">19</div>
<div class="t" style="left:-1.8px;width:60px;text-align:center;top:866.63px;font-size:17.8px;color:#222;font-weight:400">20</div>
<div class="t" style="left:45.2px;width:60px;text-align:center;top:866.63px;font-size:17.8px;color:#222;font-weight:700">21</div>
<div class="t" style="left:91.6px;width:60px;text-align:center;top:866.63px;font-size:17.8px;color:#222;font-weight:700">22</div>
<div class="t" style="left:138.5px;width:60px;text-align:center;top:866.63px;font-size:17.8px;color:#222;font-weight:700">23</div>
<div class="t" style="left:184.5px;width:60px;text-align:center;top:866.63px;font-size:17.8px;color:#222;font-weight:700">24</div>
<div class="t" style="left:231.9px;width:60px;text-align:center;top:866.63px;font-size:17.8px;color:#222;font-weight:700">25</div>
<div class="t" style="left:280.8px;width:60px;text-align:center;top:866.63px;font-size:17.8px;color:#222;font-weight:700">26</div>
<div class="t" style="left:-1.8px;width:60px;text-align:center;top:896.53px;font-size:17.8px;color:#222;font-weight:400">27</div>
<div class="a" style="left:52px;top:890px;width:47px;height:30px;background:#9ecae8;border:1px solid #1f5f95"></div>
<div class="t" style="left:45.2px;width:60px;text-align:center;top:896.53px;font-size:17.8px;color:#0b5a98;font-weight:700">28</div>
<div class="t" style="left:91.6px;width:60px;text-align:center;top:896.53px;font-size:17.8px;color:#222;font-weight:700">29</div>
<div class="t" style="left:138.5px;width:60px;text-align:center;top:896.53px;font-size:17.8px;color:#222;font-weight:700">30</div>
<div class="t" style="left:184.5px;width:60px;text-align:center;top:896.53px;font-size:17.8px;color:#999;font-weight:700">1</div>
<div class="t" style="left:231.9px;width:60px;text-align:center;top:896.53px;font-size:17.8px;color:#999;font-weight:700">2</div>
<div class="t" style="left:280.8px;width:60px;text-align:center;top:896.53px;font-size:17.8px;color:#999;font-weight:700">3</div>
<div class="t" style="left:-1.8px;width:60px;text-align:center;top:926.43px;font-size:17.8px;color:#999;font-weight:400">4</div>
<div class="t" style="left:45.2px;width:60px;text-align:center;top:926.43px;font-size:17.8px;color:#999;font-weight:700">5</div>
<div class="t" style="left:91.6px;width:60px;text-align:center;top:926.43px;font-size:17.8px;color:#999;font-weight:700">6</div>
<div class="t" style="left:138.5px;width:60px;text-align:center;top:926.43px;font-size:17.8px;color:#999;font-weight:700">7</div>
<div class="t" style="left:184.5px;width:60px;text-align:center;top:926.43px;font-size:17.8px;color:#999;font-weight:700">8</div>
<div class="t" style="left:231.9px;width:60px;text-align:center;top:926.43px;font-size:17.8px;color:#999;font-weight:700">9</div>
<div class="t" style="left:280.8px;width:60px;text-align:center;top:926.43px;font-size:17.8px;color:#999;font-weight:700">10</div>
</body></html>
